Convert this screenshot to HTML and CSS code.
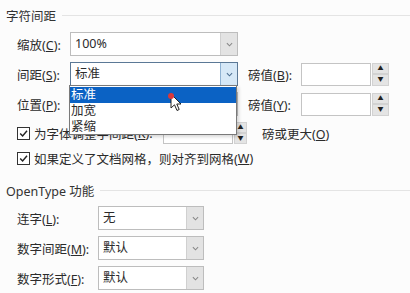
FILE: index.html
```html
<!DOCTYPE html>
<html lang="zh-CN">
<head>
    <meta charset="UTF-8">
    <title>字符间距</title>
    <link rel="stylesheet" href="styles.css">
</head>
<body>
    <div id="panel">
        <div class="group-title"><span>字符间距</span><i class="rule"></i></div>

        <div class="rows top-rows">
            <div class="row">
                <span class="label">缩放(<u>C</u>):</span>
                <div class="combo wide"><span class="value">100%</span><span class="drop"><svg viewBox="0 0 8 5"><path d="M1 1 L4 4 L7 1"/></svg></span></div>
            </div>
            <div class="row">
                <span class="label">间距(<u>S</u>):</span>
                <div class="combo wide focused"><span class="value">标准</span><span class="drop"><svg viewBox="0 0 8 5"><path d="M1 1 L4 4 L7 1"/></svg></span></div>
                <span class="label right">磅值(<u>B</u>):</span>
                <div class="spin"><span class="field"></span><span class="arrows"><b>&#9650;</b><b>&#9660;</b></span></div>
            </div>
            <div class="row">
                <span class="label">位置(<u>P</u>):</span>
                <div class="combo wide"><span class="value">标准</span><span class="drop"><svg viewBox="0 0 8 5"><path d="M1 1 L4 4 L7 1"/></svg></span></div>
                <span class="label right">磅值(<u>Y</u>):</span>
                <div class="spin"><span class="field"></span><span class="arrows"><b>&#9650;</b><b>&#9660;</b></span></div>
            </div>
        </div>

        <div class="check-row first">
            <label class="check kerning"><span class="box"><svg viewBox="0 0 10 10"><path d="M2 5 L4.2 7.3 L8.2 2.5"/></svg></span>为字体调整字间距(<u>K</u>):</label>
            <div class="spin small"><span class="field"></span><span class="arrows"><b>&#9650;</b><b>&#9660;</b></span></div>
            <span class="after">磅或更大(<u>O</u>)</span>
        </div>
        <div class="check-row second">
            <label class="check"><span class="box"><svg viewBox="0 0 10 10"><path d="M2 5 L4.2 7.3 L8.2 2.5"/></svg></span>如果定义了文档网格，则对齐到网格(<u>W</u>)</label>
        </div>

        <div class="group-title second-title"><span>OpenType 功能</span><i class="rule"></i></div>

        <div class="rows bottom-rows">
            <div class="row">
                <span class="label long">连字(<u>L</u>):</span>
                <div class="combo narrow"><span class="value">无</span><span class="drop"><svg viewBox="0 0 8 5"><path d="M1 1 L4 4 L7 1"/></svg></span></div>
            </div>
            <div class="row">
                <span class="label long">数字间距(<u>M</u>):</span>
                <div class="combo narrow"><span class="value">默认</span><span class="drop"><svg viewBox="0 0 8 5"><path d="M1 1 L4 4 L7 1"/></svg></span></div>
            </div>
            <div class="row">
                <span class="label long">数字形式(<u>F</u>):</span>
                <div class="combo narrow"><span class="value">默认</span><span class="drop"><svg viewBox="0 0 8 5"><path d="M1 1 L4 4 L7 1"/></svg></span></div>
            </div>
        </div>

        <!-- открытый список поля "间距" -->
        <ul id="drop-list">
            <li class="selected">标准</li>
            <li>加宽</li>
            <li>紧缩</li>
        </ul>

        <div id="pointer">
            <i class="dot"></i>
            <svg viewBox="0 0 12 19" width="12" height="19"><path d="M1 1 L1 15 L4.5 11.8 L7 17.5 L9.2 16.5 L6.8 11 L11 11 Z" fill="#fff" stroke="#222" stroke-width="1" stroke-linejoin="round"/></svg>
        </div>
    </div>
</body>
</html>
```

FILE: styles.css
```css
body {
    margin: 0;
    padding: 0;
    background: #fcfcfc;
    font-family: "Noto Sans", "Noto Sans CJK SC", sans-serif;
    font-size: 12.5px;
    color: #2b2b2b;
}
u { text-decoration: underline; text-underline-offset: 1px; }
#panel {
    position: relative;
    width: 410px;
    height: 293px;
    padding-top: 8px;
    box-sizing: border-box;
    overflow: hidden;
}
.group-title { display: flex; align-items: center; height: 14px; padding-left: 6px; color: #333; }
.group-title .rule { flex: 1; border-top: 1px solid #e4e4e4; margin-left: 6px; }
.second-title { margin-top: 15px; }

.rows { display: flex; flex-direction: column; gap: 6px; }
.top-rows { margin-top: 10px; }
.bottom-rows { margin-top: 9px; }
.row { display: flex; align-items: center; height: 24px; }
.label { padding-left: 17px; width: 53px; box-sizing: content-box; white-space: nowrap; }
.label.long { width: 81px; }
.label.right { padding-left: 10px; }

.combo {
    display: flex;
    height: 24px;
    box-sizing: border-box;
    border: 1px solid #bdbdbd;
    background: #fff;
}
.combo.wide { width: 168px; }
.combo.narrow { width: 106px; }
.combo .value { flex: 1; padding-left: 4px; line-height: 22px; }
.combo .drop {
    width: 16px;
    background: #e3e3e3;
    border-left: 1px solid #d0d0d0;
    display: flex;
    align-items: center;
    justify-content: center;
}
.combo .drop svg { width: 7px; height: 5px; fill: none; stroke: #888; stroke-width: 1.2; }
.combo.focused { border-color: #5b7896; }
.combo.focused .drop { background: #d6e8f7; border-left-color: #8fb2d3; }
.combo.focused .drop svg { stroke: #4d6f92; }

.spin { display: flex; height: 23px; width: 88px; }
.spin .field { flex: 1; border: 1px solid #c4c4c4; background: #fff; }
.spin .arrows { width: 17px; display: flex; flex-direction: column; margin-left: 1px; }
.spin .arrows b {
    flex: 1;
    background: #e4e4e4;
    border: 1px solid #d2d2d2;
    font-size: 6px;
    line-height: 9px;
    text-align: center;
    color: #222;
    font-weight: normal;
}
.spin.small { width: 84px; height: 22px; }
.spin.small .arrows { width: 13px; }

.check-row { display: flex; align-items: center; height: 22px; }
.check-row.first { margin-top: 6px; }
.check-row.second { margin-top: 4px; height: 20px; }
.check { display: flex; align-items: center; padding-left: 17px; white-space: nowrap; }
.check.kerning { width: 163px; box-sizing: border-box; overflow: hidden; }
.check .box {
    width: 11px;
    height: 11px;
    border: 1px solid #333;
    background: #fff;
    margin-right: 4px;
    display: flex;
}
.check .box svg { width: 11px; height: 11px; fill: none; stroke: #222; stroke-width: 1.3; }
.after { margin-left: 15px; }

#drop-list {
    position: absolute;
    left: 69px;
    top: 85px;
    width: 168px;
    height: 50px;
    margin: 0;
    padding: 1px 0 0;
    box-sizing: border-box;
    list-style: none;
    background: #fff;
    border: 1px solid #7a7a7a;
    box-shadow: 2px 2px 3px rgba(0, 0, 0, 0.15);
}
#drop-list li { height: 16px; line-height: 16px; padding-left: 1px; }
#drop-list li.selected { background: #0b62c4; color: #fff; }

#pointer { position: absolute; left: 170px; top: 93px; width: 12px; height: 19px; }
#pointer svg { display: block; }
#pointer .dot {
    position: absolute;
    left: -2px;
    top: 0;
    width: 6px;
    height: 6px;
    border-radius: 50%;
    background: #d8383a;
}
```
